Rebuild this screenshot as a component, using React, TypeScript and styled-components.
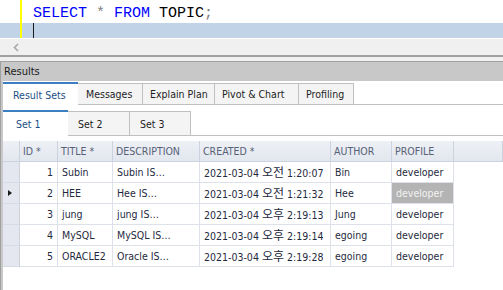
import React from "react";
import styled, { createGlobalStyle } from "styled-components";

const GlobalStyle = createGlobalStyle`
  html, body { margin: 0; padding: 0; background: #ffffff; overflow: hidden; }
  body { font-family: "DejaVu Sans Condensed", "Liberation Sans", Arial, sans-serif; font-size: 10.5px; }
  * { box-sizing: border-box; }
`;

const Window = styled.div`
  width: 503px;
  height: 290px;
  display: flex;
  flex-direction: column;
  overflow: hidden;
`;

/* ---------- Editor ---------- */
const Editor = styled.div`
  height: 38px;
  display: flex;
  flex-direction: column;
  background: #ffffff;
`;

const EditorRow = styled.div<{ $height: number; $current?: boolean }>`
  height: ${(p) => p.$height}px;
  display: flex;
  background: ${(p) => (p.$current ? "#c0d3e7" : "#ffffff")};
`;

const Gutter = styled.div`
  width: 20px;
  flex: none;
`;

const ChangeMark = styled.div`
  width: 2px;
  flex: none;
  background: #ffff00;
`;

const CodeText = styled.div<{ $lh: number }>`
  padding-left: 11px;
  font-family: "Liberation Mono", "Courier New", monospace;
  font-size: 15px;
  line-height: ${(p) => p.$lh}px;
  white-space: pre;
  color: #000000;
`;

const Tok = styled.span<{ $kind: "kw" | "op" | "id" }>`
  color: ${(p) => (p.$kind === "kw" ? "#0000ff" : p.$kind === "op" ? "#808080" : "#000000")};
`;

const Caret = styled.span`
  display: inline-block;
  vertical-align: top;
  width: 1px;
  height: 15px;
  background: #1a1a1a;
`;

const HScroll = styled.div`
  height: 17px;
  background: #f0f0f0;
  border-top: 1px solid #ffffff;
  display: flex;
  align-items: center;
  padding-left: 13px;
`;

const Splitter = styled.div`
  height: 7px;
  background: #f0f0f0;
  border-top: 2px solid #a0a0a0;
  border-bottom: 1px solid #a0a0a0;
`;

/* ---------- Results panel ---------- */
const ResultsPanel = styled.div`
  flex: 1;
  display: flex;
  flex-direction: column;
  background: #c8c8c8;
  border-left: 1px solid #a0a0a0;
`;

const ResultsHeader = styled.div`
  height: 19px;
  line-height: 19px;
  padding-left: 3px;
  color: #1a1a1a;
  font-size: 11px;
`;

const ResultsBody = styled.div`
  flex: 1;
  margin-left: 2px;
  background: #ffffff;
  display: flex;
  flex-direction: column;
`;

const TabStrip = styled.div<{ $height: number }>`
  height: ${(p) => p.$height}px;
  display: flex;
  align-items: flex-end;
  border-bottom: 1px solid #c0c0c0;
  flex: none;
`;

const Tab = styled.div<{ $active?: boolean; $width: number; $tall: number; $pad: number }>`
  width: ${(p) => p.$width}px;
  height: ${(p) => (p.$active ? p.$tall + 2 : p.$tall)}px;
  margin-bottom: ${(p) => (p.$active ? -1 : 0)}px;
  margin-right: -1px;
  padding-left: ${(p) => p.$pad}px;
  display: flex;
  align-items: center;
  white-space: nowrap;
  background: ${(p) => (p.$active ? "#ffffff" : "#f4f4f4")};
  color: ${(p) => (p.$active ? "#1d4f86" : "#1e1e1e")};
  border: 1px solid #c0c0c0;
  border-bottom: none;
  border-top: ${(p) => (p.$active ? "2px solid #3b7fc2" : "1px solid #c0c0c0")};
  ${(p) => (p.$active ? "border-left: none; border-right: none; position: relative; z-index: 1;" : "")}
`;

/* ---------- Grid ---------- */
const COLS = "17px 38px 55px 87px 131px 61px 62px 1fr";

const Grid = styled.div`
  margin-top: 5px;
  display: flex;
  flex-direction: column;
`;

const GridRow = styled.div`
  display: grid;
  grid-template-columns: ${COLS};
  height: 21px;
`;

const HeadCell = styled.div`
  background: linear-gradient(#eef0f5, #e2e6ee);
  border-right: 1px solid #ccd2de;
  border-bottom: 1px solid #ccd2de;
  color: #566178;
  padding-left: 3px;
  line-height: 20px;
  white-space: nowrap;
  overflow: hidden;
`;

const IndicatorCell = styled.div`
  background: #e4e7ef;
  border-right: 1px solid #ccd2de;
  border-bottom: 1px solid #d6dbe5;
  display: flex;
  align-items: center;
  padding-left: 5px;
`;

const RowArrow = styled.span`
  width: 0;
  height: 0;
  border-top: 3.5px solid transparent;
  border-bottom: 3.5px solid transparent;
  border-left: 4px solid #1a1a1a;
`;

const Cell = styled.div<{ $align?: "right"; $selected?: boolean }>`
  border-right: 1px solid #dde1ea;
  border-bottom: 1px solid #dde1ea;
  padding: 0 4px 0 4px;
  line-height: 20px;
  white-space: nowrap;
  overflow: hidden;
  text-align: ${(p) => p.$align ?? "left"};
  color: ${(p) => (p.$selected ? "#f2f2f2" : "#1f2a3e")};
  background: ${(p) => (p.$selected ? "#b4b4b4" : "#ffffff")};
`;

const Ko = styled.span`
  font-family: "Noto Sans CJK KR", sans-serif;
  font-size: 12px;
`;

type Row = { id: number; title: string; desc: string; date: string; ampm: string; time: string; author: string; profile: string };

const rows: Row[] = [
  { id: 1, title: "Subin", desc: "Subin IS…", date: "2021-03-04", ampm: "오전", time: "1:20:07", author: "Bin", profile: "developer" },
  { id: 2, title: "HEE", desc: "Hee IS…", date: "2021-03-04", ampm: "오전", time: "1:21:32", author: "Hee", profile: "developer" },
  { id: 3, title: "jung", desc: "jung IS…", date: "2021-03-04", ampm: "오후", time: "2:19:13", author: "Jung", profile: "developer" },
  { id: 4, title: "MySQL", desc: "MySQL IS…", date: "2021-03-04", ampm: "오후", time: "2:19:14", author: "egoing", profile: "developer" },
  { id: 5, title: "ORACLE2", desc: "Oracle IS…", date: "2021-03-04", ampm: "오후", time: "2:19:28", author: "egoing", profile: "developer" },
];

const mainTabs = [
  { label: "Result Sets", width: 75, pad: 10 },
  { label: "Messages", width: 66, pad: 8 },
  { label: "Explain Plan", width: 73, pad: 7 },
  { label: "Pivot & Chart", width: 85, pad: 7 },
  { label: "Profiling", width: 56, pad: 7 },
];

const setTabs = [
  { label: "Set 1", width: 65, pad: 13 },
  { label: "Set 2", width: 63, pad: 10 },
  { label: "Set 3", width: 62, pad: 10 },
];

export default function App() {
  return (
    <>
      <GlobalStyle />
      <Window>
        <Editor>
          <EditorRow $height={23}>
            <Gutter />
            <ChangeMark />
            <CodeText $lh={27}>
              <Tok $kind="kw">SELECT</Tok> <Tok $kind="op">*</Tok> <Tok $kind="kw">FROM</Tok>{" "}
              <Tok $kind="id">TOPIC</Tok>
              <Tok $kind="op">;</Tok>
            </CodeText>
          </EditorRow>
          <EditorRow $height={15} $current>
            <Gutter />
            <ChangeMark />
            <CodeText $lh={15}>
              <Caret />
            </CodeText>
          </EditorRow>
        </Editor>
        <HScroll>
          <svg width="6" height="9" viewBox="0 0 6 9">
            <path d="M5 1 L1.5 4.5 L5 8" fill="none" stroke="#a8a8a8" strokeWidth="1.6" />
          </svg>
        </HScroll>
        <Splitter />
        <ResultsPanel>
          <ResultsHeader>Results</ResultsHeader>
          <ResultsBody>
            <TabStrip $height={24}>
              {mainTabs.map((t, i) => (
                <Tab key={t.label} $active={i === 0} $width={t.width} $tall={21} $pad={t.pad}>
                  {t.label}
                </Tab>
              ))}
            </TabStrip>
            <TabStrip $height={31}>
              {setTabs.map((t, i) => (
                <Tab key={t.label} $active={i === 0} $width={t.width} $tall={24} $pad={t.pad}>
                  {t.label}
                </Tab>
              ))}
            </TabStrip>
            <Grid>
              <GridRow>
                <HeadCell />
                <HeadCell>ID *</HeadCell>
                <HeadCell>TITLE *</HeadCell>
                <HeadCell>DESCRIPTION</HeadCell>
                <HeadCell>CREATED *</HeadCell>
                <HeadCell>AUTHOR</HeadCell>
                <HeadCell>PROFILE</HeadCell>
                <HeadCell />
              </GridRow>
              {rows.map((r, i) => (
                <GridRow key={r.id}>
                  <IndicatorCell>{i === 1 && <RowArrow />}</IndicatorCell>
                  <Cell $align="right">{r.id}</Cell>
                  <Cell>{r.title}</Cell>
                  <Cell>{r.desc}</Cell>
                  <Cell>
                    {r.date} <Ko>{r.ampm}</Ko> {r.time}
                  </Cell>
                  <Cell>{r.author}</Cell>
                  <Cell $selected={i === 1}>{r.profile}</Cell>
                </GridRow>
              ))}
            </Grid>
          </ResultsBody>
        </ResultsPanel>
      </Window>
    </>
  );
}
